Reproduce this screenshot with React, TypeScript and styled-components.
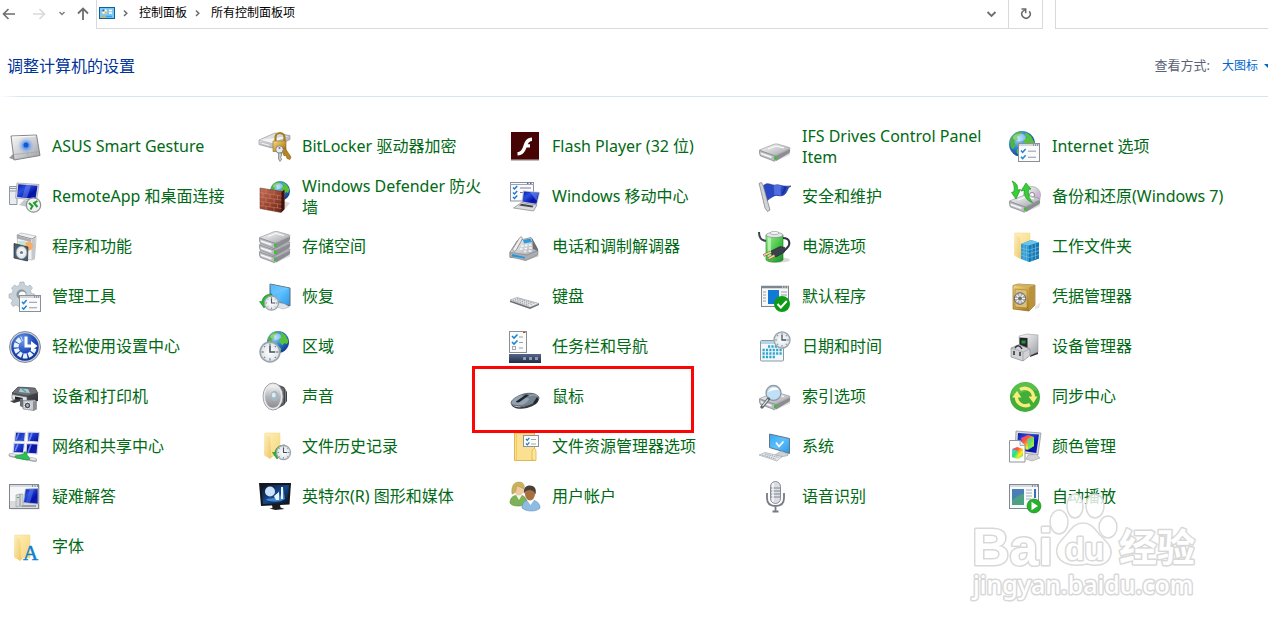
import React from "react";
import styled, { createGlobalStyle } from "styled-components";

const GlobalStyle = createGlobalStyle`
  * { box-sizing: border-box; }
  body {
    margin: 0;
    background: #fff;
    overflow-x: hidden;
    font-family: "Noto Sans", "Noto Sans CJK SC", sans-serif;
    font-size: 16px;
  }
`;

/* ---------- layout ---------- */

const Page = styled.div`
  position: relative;
  min-height: 100vh;
  background: #fff;
`;

const NavBar = styled.header`
  display: flex;
  height: 29px;
`;

const NavButtons = styled.div`
  display: flex;
  width: 96px;
  padding-top: 6px;
`;

const NavButton = styled.button<{ $gap: number; $narrow?: boolean }>`
  flex: none;
  width: ${(p) => (p.$narrow ? 10 : 16)}px;
  height: 16px;
  margin-left: ${(p) => p.$gap}px;
  padding: 0;
  border: 0;
  background: none;
  display: flex;
  justify-content: center;
`;

const AddressBar = styled.div`
  flex: 1;
  display: flex;
  border: 1px solid #d9d9d9;
  border-top: 0;
  margin-right: 12px;
`;

const Crumbs = styled.nav`
  flex: 1;
  display: flex;
  align-items: flex-start;
  padding-left: 2px;
  padding-top: 4px;
  font-size: 12px;
  line-height: 18px;
`;

const Crumb = styled.a`
  color: #000;
  text-decoration: none;
`;

const Separator = styled.svg`
  width: 24px;
  height: 18px;
`;

const CrumbIcon = styled.svg`
  width: 16px;
  height: 18px;
`;

const CrumbWrap = styled.div`
  display: flex;
`;

const AddressButton = styled.button<{ $divided?: boolean }>`
  width: 34px;
  padding: 6px 0 0;
  border: 0;
  border-left: ${(p) => (p.$divided ? "1px solid #d9d9d9" : "0")};
  background: none;
  display: flex;
  justify-content: center;
`;

const SearchBox = styled.input`
  width: 213px;
  height: 29px;
  border: 1px solid #d9d9d9;
  border-top: 0;
  border-right: 0;
  padding: 0 8px;
  outline: 0;
  background: #fff;
`;

const Heading = styled.div`
  display: flex;
  justify-content: space-between;
  align-items: center;
  height: 67px;
  padding: 6px 0 0 7px;
`;

const Title = styled.h1`
  margin: 0;
  font-size: 16px;
  font-weight: 400;
  line-height: 22px;
  color: #003399;
`;

const ViewBy = styled.div`
  display: flex;
  align-items: center;
`;

const ViewLabel = styled.label`
  font-size: 13px;
  line-height: 20px;
  color: #5a6377;
  margin-right: 12px;
  padding-bottom: 2px;
`;

const ViewSelect = styled.select`
  appearance: none;
  border: 0;
  padding: 0;
  margin: 0;
  width: 42px;
  background: none;
  font: inherit;
  font-size: 12px;
  line-height: 20px;
  color: #0066cc;
`;

const Rule = styled.hr`
  margin: 0;
  border: 0;
  height: 1px;
  background: linear-gradient(to right, #fff, #d5e4f3 20px);
`;

const Grid = styled.ul`
  list-style: none;
  margin: 0;
  padding: 25px 0 32px 9px;
  display: grid;
  grid-template-columns: repeat(auto-fill, 250px);
  grid-auto-rows: 50px;
`;

const Cell = styled.li`
  position: relative;
  display: flex;
`;

const Item = styled.a`
  display: flex;
  align-items: center;
  gap: 11px;
  color: #006a14;
  text-decoration: none;
`;

const ItemLabel = styled.span`
  max-width: 192px;
  line-height: 21px;
  padding-bottom: 1px;
`;

const ItemIcon = styled.svg`
  flex: none;
  width: 32px;
  height: 32px;
  overflow: visible;
`;

const Marker = styled.div`
  position: absolute;
  left: -37px;
  top: -6px;
  width: 222px;
  height: 67px;
  border: 3px solid #fb0505;
  z-index: 1;
  pointer-events: none;
`;

const Watermark = styled.svg`
  position: absolute;
  right: 62px;
  top: 490px;
  width: 240px;
  height: 120px;
  pointer-events: none;
`;

const Defs = styled.svg`
  position: absolute;
  width: 0;
  height: 0;
`;

/* ---------- shared drawing parts ---------- */

const Grad = ({ id, stops, diag = true }: { id: string; stops: string[]; diag?: boolean }) => (
  <linearGradient id={id} x1="0" y1="0" x2={diag ? "1" : "0"} y2="1">
    {stops.map((c, i) => (
      <stop key={i} offset={i / (stops.length - 1)} stopColor={c} />
    ))}
  </linearGradient>
);

const SharedDefs = () => (
  <Defs aria-hidden="true">
    <defs>
      <Grad id="silver" stops={["#fafafa", "#cfd0d3", "#9b9da2"]} />
      <Grad id="silverV" diag={false} stops={["#f4f4f4", "#b5b7ba", "#8b8d90"]} />
      <Grad id="screen" stops={["#0a1a9c", "#2a4fe0", "#0713a8", "#1021b8"]} />
      <Grad id="sky" stops={["#35a8f2", "#5cc0ff", "#2a96e6"]} />
      <Grad id="folderBack" stops={["#fff0b8", "#f5d67c"]} />
      <Grad id="folderFront" stops={["#fdf0c4", "#f0cb6c"]} />
      <Grad id="gold" stops={["#f5dc8c", "#cfa23a", "#94691a"]} />
      <Grad id="green" stops={["#a4ee9a", "#4cc94a", "#1f8c2a"]} />
      <Grad id="dark" stops={["#6a6d70", "#2c2f33"]} />
      <Grad id="brick" stops={["#c4725a", "#9a4430", "#5c2013"]} />
      <Grad id="bar" diag={false} stops={["#54688a", "#222c46"]} />
      <Grad id="rainbow" stops={["#ff33cc", "#ff5533", "#ffee22", "#33dd55"]} />
      <Grad id="rainbowB" stops={["#33e0ff", "#30e070", "#f5ff30"]} />
      <Grad id="navy" stops={["#0a1022", "#16478c", "#071022"]} />
      <radialGradient id="ocean" cx="0.35" cy="0.3" r="0.8">
        <stop offset="0" stopColor="#9fdcfa" />
        <stop offset="0.45" stopColor="#2f84d4" />
        <stop offset="1" stopColor="#0c2c8c" />
      </radialGradient>
      <radialGradient id="easeBlue" cx="0.4" cy="0.25" r="0.9">
        <stop offset="0" stopColor="#6f9be8" />
        <stop offset="0.5" stopColor="#1f4cb8" />
        <stop offset="1" stopColor="#0a2a86" />
      </radialGradient>
      <radialGradient id="glow">
        <stop offset="0" stopColor="#0a50c8" />
        <stop offset="0.35" stopColor="#3f86ee" />
        <stop offset="1" stopColor="#b9cdf2" stopOpacity="0" />
      </radialGradient>
      <radialGradient id="face">
        <stop offset="0" stopColor="#fff" />
        <stop offset="0.8" stopColor="#e3e8ec" />
        <stop offset="1" stopColor="#b4bcc2" />
      </radialGradient>
    </defs>
  </Defs>
);

const Globe = ({ x, y, r }: { x: number; y: number; r: number }) => (
  <g transform={`translate(${x} ${y}) scale(${r / 10})`}>
    <circle r="10" fill="url(#ocean)" />
    <path d="M-8.5-4C-7-8-3-9.6 0-9.6L-1-7l-3 1 1 3-3 1 1 4-2 2C-9 3-9.5-1-8.5-4z" fill="#4fb53c" />
    <path d="M3-9l4 3 2.6 5-1.6 3-2-1-2 2-3-3 1-4 2-1-2-2zM-4 4l4 0 3 2-1 3-3 .8L-4 7z" fill="#55c23a" />
    <ellipse cx="-2" cy="-5" rx="5" ry="3" fill="#fff" opacity=".35" />
  </g>
);

const Clock = ({ x, y, r }: { x: number; y: number; r: number }) => (
  <g transform={`translate(${x} ${y}) scale(${r / 10})`}>
    <circle r="9.5" fill="url(#face)" stroke="#9aa3aa" strokeWidth="1.4" />
    <path d="M0-8v2M0 6v2M-8 0h2M6 0h2M5.600-5.600l-1 1M-5.600 5.600l1-1M-5.600-5.600l1 1M5.600 5.600l-1-1" stroke="#7d878f" strokeWidth="1.200" />
    <path d="M0-6V0h5" fill="none" stroke="#47525c" strokeWidth="1.500" />
  </g>
);

const Drive = ({ y = 0 }: { y?: number }) => (
  <g transform={`translate(0 ${y})`}>
    <path d="M1 23l13 7 17-9v3L15 31z" fill="#000" opacity=".12" />
    <path d="M.5 19L15 13.200q2-.5 4 0L30.500 16.500q1 .8 0 1.500L17 24.500q-1.500.6-3 .2z" fill="url(#silver)" stroke="#8c8e92" strokeWidth=".6" />
    <path d="M.5 19.500Q0 23 1.500 25L15 30q1 0 1.500-.8V25z" fill="#b9bbc0" stroke="#77797d" strokeWidth=".6" />
    <path d="M16.500 25L31 18q.5 2.500-.5 4L17 30z" fill="#8b8d92" />
    <path d="M1.500 21.500l11 3.800v2L2 23.500z" fill="#f6f6f8" />
    <path d="M15 25.500l2.500-.3v3l-2.500.6z" fill="#38c432" />
    <path d="M9 18l8-3 8 2" fill="none" stroke="#fff" strokeWidth="1" />
  </g>
);

const Folder = ({ y = 0 }: { y?: number }) => (
  <g transform={`translate(0 ${y})`}>
    <path d="M6 2h15v23H6z" fill="url(#folderBack)" stroke="#f1d584" strokeWidth=".5" />
    <path d="M5 2l6 4.500V28l-6-4z" fill="url(#folderFront)" />
    <path d="M11 6.500V28l3-3V25h-2z" fill="#eecb70" />
  </g>
);

const CheckWindow = ({ x, y, w, h }: { x: number; y: number; w: number; h: number }) => (
  <g transform={`translate(${x} ${y})`}>
    <rect x=".5" y=".5" width={w - 1} height={h - 1} fill="#fbfbfc" stroke="#8a9096" />
    <path d={`M1 2h${w - 2}`} stroke="#c4c9ce" strokeWidth="1.500" />
    <path d={`M${w - 7} 2h1M${w - 5} 2h1M${w - 3} 2h1`} stroke="#4a5d78" strokeWidth="1.200" />
    <path d={`M3 ${h * 0.4}l1.600 1.800 3-3.500M3 ${h * 0.73}l1.600 1.800 3-3.500`} fill="none" stroke="#1d86d6" strokeWidth="1.500" />
    <path d={`M10 ${h * 0.43}h${w - 14}M10 ${h * 0.75}h${w - 14}`} stroke="#9097ab" strokeWidth="1" />
  </g>
);

const RecoveryArrow = () => (
  <path d="M13 13C7 13 3.500 16 3 20.500H.5L5 27l5-6.500H7.500c.5-2.500 2.500-4 5.500-4.300z" fill="#26b52d" stroke="#127a1a" strokeWidth=".5" />
);

/* ---------- icons ---------- */

const icons: Record<string, React.ReactNode> = {
  touchpad: (
    <>
      <path d="M0 27l6 2-2-6z" fill="#9a9a9c" />
      <path d="M2 5L27.500 4 31 24.500 5 29z" fill="url(#silver)" stroke="#77797e" strokeWidth=".9" />
      <path d="M3.300 6l23.400-.9" stroke="#fff" strokeWidth=".8" />
      <circle cx="17" cy="14.500" r="9" fill="url(#glow)" opacity=".7" />
      <circle cx="17" cy="14" r="2.500" fill="#0d5bdc" />
      <path d="M5 23.500l25-2.800M18.500 22l.6 4.500" stroke="#a2a3a8" strokeWidth=".7" />
    </>
  ),
  bitlocker: (
    <>
      <path d="M0 9L16 2l15 2.500v4L13 17 0 13.500z" fill="url(#silver)" stroke="#85878b" strokeWidth=".6" />
      <path d="M0 9l13 3.500L31 5M2 11l9 2.500v2L2 13z" fill="#f4f4f5" stroke="#9ea0a4" strokeWidth=".5" />
      <path d="M16.500 11V6.500a4.500 4.500 0 0 1 9 0V11" fill="none" stroke="#a47f22" strokeWidth="2.200" />
      <path d="M14 10h13v10.500H14z" fill="url(#gold)" stroke="#8e6a18" strokeWidth=".6" />
      <path d="M22 18l4-1 6 9-1 2.500-3-1-1-3-2 .2z" fill="#b78422" stroke="#74500c" strokeWidth=".5" />
      <circle cx="20.500" cy="18.500" r="3.700" fill="#e8e9eb" stroke="#74777b" strokeWidth=".8" />
      <circle cx="20.500" cy="17" r="1" fill="#777" />
      <path d="M19.500 22v6l1.500 2.500 1.500-2v-1l-1-1 1-1.500V22z" fill="#c5c7ca" stroke="#63666a" strokeWidth=".6" />
    </>
  ),
  flash: (
    <>
      <path d="M2 28h28v2H2z" fill="#000" opacity=".25" />
      <rect x="2" y="1" width="28" height="27.500" fill="#460404" />
      <path d="M23 6.500c-5.500 0-7 4-8.500 8-1.500 4-2.500 6.500-6 6.500v3.500c5.500 0 7.500-4 9-8h3.500v-3.300h-2.200c.9-2 2-3.300 4.200-3.300z" fill="#fff" />
    </>
  ),
  drive: <Drive />,
  internet: (
    <>
      <Globe x={13} y={13} r={13} />
      <CheckWindow x={9} y={12} w={22} h={19} />
    </>
  ),
  remote: (
    <>
      <path d="M.5 5.500H8v18H.5z" fill="#e9edf2" stroke="#8d98a5" />
      <path d="M0 7.500h8M0 10h8" stroke="#8d98a5" />
      <path d="M8 2l22 1.500-2.500 16L6.500 17z" fill="#dcdde0" stroke="#9a9ca1" strokeWidth=".7" />
      <path d="M9.300 3.300L28.500 4.700 26.500 18 8 16z" fill="url(#screen)" />
      <path d="M17 4l-4 12.500 5 .6L22 4.200z" fill="#6d8cf0" opacity=".5" />
      <path d="M15 19l-5 5 8 2 3-6z" fill="#c6c8cc" />
      <circle cx="24.500" cy="24" r="7.200" fill="#f0f1f2" stroke="#8d9095" strokeWidth="1.200" />
      <path d="M20 22l3.500 3-2 3.500M28.500 20L25 22l3.500 4" fill="none" stroke="#1d9a2c" strokeWidth="2" />
    </>
  ),
  firewall: (
    <>
      <Globe x={21} y={10} r={10} />
      <path d="M25 20l6 2-5 6z" fill="#000" opacity=".15" />
      <path d="M1 7l22.500 3.500 2-1.500V28L22 31.500 1 27.500z" fill="url(#brick)" stroke="#6d2b1c" strokeWidth=".5" />
      <path d="M22.500 11L25 9v19.500l-3 3z" fill="#3d120a" />
      <path d="M1 11.500l21.500 3.500M1 16l21.500 3M1 20.500l21.500 2.800M1 24.500l21.500 3M7 8v4.200M15 9.200v4.300M4 12v4.300M11 13.200v4M18.500 14.400v4M7 17v4M15 18v4M4 21v4M11 22v4M18.500 23v4M7 25.500v3M15 26.500v3.500" stroke="#d08c74" strokeWidth=".5" />
    </>
  ),
  mobility: (
    <>
      <rect x="1.500" y="1.500" width="23" height="18.500" fill="#fbfbfd" stroke="#8992a0" />
      <path d="M1 3.500h24" stroke="#9ba5b4" />
      <path d="M18 2.300h1.500M21 2.300h1.500" stroke="#33476a" />
      <path d="M4 6.500l1.500 1.500 2.700-3M4 11.500l1.500 1.500 2.700-3M4 16l1.500 1.500 2.700-3" fill="none" stroke="#1878c8" strokeWidth="1.400" />
      <path d="M11 7h11M11 11.500h5" stroke="#7d7aa0" />
      <path d="M14 9.500l17 1.500-3 13L12.500 21z" fill="#c3c6cc" />
      <path d="M15 10.500l15 1.200-2.600 11L13.500 20.500z" fill="url(#screen)" />
      <path d="M21 11l8.500.8-2 8z" fill="#86a4fa" opacity=".5" />
      <path d="M12.500 21.500L28 24l-3.500 6-20-3z" fill="#dadce0" stroke="#70747a" strokeWidth=".6" />
      <path d="M12.500 22.800l12 2-1 1.800-13.500-2z" fill="#45494f" />
    </>
  ),
  flag: (
    <>
      <path d="M4 5c5-5 8 0 13-1 4-.8 5 2 15 1-4 2-3 5-6 8-4 4-8 0-11 2-3 1.500-5 3-7 5z" fill="#2b48c4" stroke="#14257f" strokeWidth=".6" />
      <path d="M15 4c-1 3 1 6 0 10 3-1 5 .5 7 .2-.5-4-1-7 1-9.500-3-.3-5-1.300-8-.7z" fill="#6b8af0" opacity=".6" />
      <path d="M26 5.500c-2 2-2 6-4 8.500 4-1 4-5 6-7.500z" fill="#10207c" opacity=".6" />
      <path d="M0 2.500l2.500-1L4 4l7 25-2.500 1.500L6 27 1 6z" fill="#d1d3d7" stroke="#787b80" strokeWidth=".7" />
    </>
  ),
  backup: (
    <>
      <circle cx="23" cy="14" r="8.500" fill="url(#silver)" stroke="#95979b" strokeWidth=".6" />
      <path d="M23 14l8-3a8.500 8.500 0 0 1 0 6z" fill="#d9b0e8" opacity=".7" />
      <circle cx="23" cy="14" r="2.500" fill="#fff" stroke="#888" />
      <Drive y={1} />
      <path d="M3 0c5 2 6 5 5.500 9l3-.5L7 18 2.500 11.500l2.500-1C5.500 6 5 3 3 0z" fill="#35d135" stroke="#158a1b" strokeWidth=".6" />
      <path d="M17 2l5 6-2.500.5c-.5 5 0 8 4 13-6-2-8.500-6-8-12l-3.500.5z" fill="#35d135" stroke="#158a1b" strokeWidth=".6" />
    </>
  ),
  programs: (
    <>
      <path d="M8 4L12 2l15 3v3l-1.500 20-3 1-13-2z" fill="#f0f1f2" stroke="#a4a7ab" strokeWidth=".6" />
      <path d="M8 4l15 4 4-2.500" fill="none" stroke="#8f9397" />
      <path d="M22.500 8.500l3.500-2V28l-3.500 1z" fill="#c5c8cb" />
      <path d="M8 4.500l14 4v2.500L8 7.500z" fill="#a9acb0" />
      <circle cx="19.500" cy="15" r="4.500" fill="#f4ae6c" />
      <path d="M9.500 10h7v6h-7z" fill="#c9e3d7" />
      <path d="M5 12.500l14 3.500-.5 14L5 27z" fill="#4a5e70" stroke="#222e3a" strokeWidth=".7" />
      <ellipse cx="12.500" cy="21.500" rx="5.500" ry="6.500" fill="url(#face)" stroke="#8a9299" strokeWidth=".5" />
      <circle cx="12.500" cy="21.500" r="1.600" fill="#6b7c8c" />
    </>
  ),
  storage: (
    <>
      <Drive y={1.500} />
      <Drive y={-5.500} />
      <Drive y={-12.500} />
    </>
  ),
  phone: (
    <>
      <path d="M6 26l10 4 14-5-3-2z" fill="#000" opacity=".25" />
      <path d="M1 21l7-11 14-3.500 5 9.500 2 4-12 5L1 26.500z" fill="url(#silver)" stroke="#75787d" strokeWidth=".7" />
      <path d="M1 21L18 24l11-4.500v4L17 29.500 1 26z" fill="#aaaeb4" stroke="#73777d" strokeWidth=".5" />
      <path d="M23 7l6 11v2l-5-2z" fill="#6d7176" />
      <path d="M3 23l13 3v1.500l-13-2z" fill="#2398d8" />
      <path d="M14 9l7.500-1.500 1.500 3.500-8 1.500z" fill="#2b9ae0" />
      <path d="M12 15h2.500M16 14.500h2.500M20 14h2.500M11 18h2.500M15.500 17.500h2.500M20 17h3M15 20.500h2.500M19.500 20h3" stroke="#f7f8f9" strokeWidth="1.500" />
      <path d="M10.500 7C12 5 14 6 13 8.500L7.500 18.500c-1.500 3-4.500 2-3.500-1z" fill="#f0f1f3" stroke="#6d7176" strokeWidth=".7" />
    </>
  ),
  power: (
    <>
      <ellipse cx="22" cy="29" rx="9" ry="2.500" fill="#000" opacity=".15" />
      <path d="M0 1c0 6 2 8 7 9" fill="none" stroke="#3b4253" strokeWidth="2" />
      <path d="M7 4h17v25c-3 3-14 3-17 0z" fill="url(#green)" stroke="#1b7a28" strokeWidth=".6" />
      <path d="M9 6h3v22H9z" fill="#d7ffd0" opacity=".6" />
      <ellipse cx="15.500" cy="4" rx="8.500" ry="2.600" fill="#e4e7ea" stroke="#7b8187" strokeWidth=".6" />
      <ellipse cx="15.500" cy="2" rx="4.500" ry="1.600" fill="#f4f5f6" stroke="#8a8f94" strokeWidth=".6" />
      <path d="M24 7c7 0 8 6 4 10l-4 4" fill="none" stroke="#2d3546" strokeWidth="2" />
      <path d="M12 20l9-4.500 5 1-1 5-8 4.500-4-2z" fill="#3a3f4c" stroke="#181b24" strokeWidth=".5" />
      <path d="M12 21L4.500 24.500M15.500 24.500L9 28" stroke="#8b6a3a" strokeWidth="3" />
      <path d="M12 21L5 24.300M15.500 24.500L9.500 27.600" stroke="#efd3a0" strokeWidth="1.500" />
    </>
  ),
  workfolder: (
    <>
      <Folder />
      <path d="M12 13l10-4 8 2.500v16L20 31l-8-3z" fill="#2f9bd2" />
      <path d="M12 13l10-4 8 2.500-10 3z" fill="#6cc3ea" />
      <path d="M20 14.500l10-3v16L20 31z" fill="#1778b4" />
      <path d="M12 17l8 2 10-3M12 20.500l8 2 10-3M12 24l8 2.500 10-3M15 14v15M17.500 14.500V30M23 14v16M26.500 13v15" fill="none" stroke="#7cc6e8" strokeWidth=".6" />
    </>
  ),
  admin: (
    <>
      <path d="M11 1h4l.5 3 3 1.500L21 4l2.500 3-2 2.500 1 3 3 .5v4l-3 .5-1 3 1.500 2.500-3 3-2.500-1.500-2 1-.5 3h-4l-1-3-3-1.500L4 25.500 2 22.500l1.500-3-1.500-2-2-.5 0-4 3-.5 1-3-1.500-2.500 3-3L8 5.500 10.500 4z" fill="#c7d1d9" stroke="#a0adb7" strokeWidth=".6" />
      <circle cx="12.500" cy="13.500" r="5" fill="#8a949d" />
      <circle cx="13.300" cy="14" r="3.500" fill="#fff" />
      <CheckWindow x={10} y={14} w={22} h={17} />
    </>
  ),
  recovery: (
    <>
      <path d="M11 3l20 4v18l-20-7z" fill="url(#sky)" stroke="#5a6a78" strokeWidth="1" />
      <path d="M11 3l20 4L13 15z" fill="#8ad2ff" opacity=".4" />
      <path d="M17 21l9 2 4 3-6 2-9-3z" fill="#e0e4e8" stroke="#9da4ab" strokeWidth=".5" />
      <RecoveryArrow />
      <Clock x={12.500} y={22} r={7.500} />
    </>
  ),
  keyboard: (
    <>
      <path d="M1 19.500l20 6.500 9-3.500v1.500l-9 4L1 21z" fill="#686c72" />
      <path d="M1 19l7-2.500 22 6-9 3.800z" fill="#e8eaec" stroke="#8c9095" strokeWidth=".6" />
      <path d="M4 19.200l16 5.200M6 18.200L23 23.500M8 17.400L26 22.600" stroke="#9da2a8" strokeWidth="1" strokeDasharray="1.500 .8" />
    </>
  ),
  defaults: (
    <>
      <rect x="2.500" y="5.500" width="27" height="20" fill="#f6f7f8" stroke="#7c868f" />
      <path d="M2 6h28" stroke="#7c868f" strokeWidth="2.500" />
      <path d="M23 6h1M25.500 6h1M28 6h1" stroke="#fff" />
      <rect x="9" y="9" width="11" height="14" fill="#127ad6" />
      <path d="M4 11h3M4 14h3M4 17h3M4 20h3M22 11h6M22 14h6" stroke="#98a0a7" />
      <circle cx="23" cy="23" r="8" fill="#0f9a15" />
      <path d="M18.500 23l3.300 3.500 6-6.500" fill="none" stroke="#fff" strokeWidth="2" />
    </>
  ),
  safe: (
    <>
      <path d="M26 26l6-5-2 6-4 1z" fill="#000" opacity=".1" />
      <path d="M4 4.500L9 3l17 1v20l-6 6L4 28z" fill="url(#gold)" stroke="#80601a" strokeWidth=".6" />
      <path d="M4 4.500L9 3l17 1-6 2.500z" fill="#cdb066" />
      <path d="M20 6.500L26 4v20l-6 6z" fill="#b8923c" />
      <path d="M6 8l12 1v18L6 26z" fill="#dcc078" stroke="#9e7b2b" strokeWidth=".6" />
      <circle cx="11" cy="17.500" r="5.800" fill="#a8aaac" stroke="#55575a" strokeWidth=".8" />
      <path d="M11 12.500v10M6 17.500h10M7.500 14l7 7M14.500 14l-7 7" stroke="#f2f2f2" strokeWidth="1.200" />
      <circle cx="11" cy="17.500" r="2" fill="#6a6c70" />
    </>
  ),
  ease: (
    <>
      <circle cx="16" cy="16" r="15.500" fill="#c9ced8" stroke="#6d7687" strokeWidth=".8" />
      <circle cx="16" cy="16" r="13.700" fill="url(#easeBlue)" />
      <path d="M25 17.500A9 9 0 1 1 13 7.500" fill="none" stroke="#e9f2ff" strokeWidth="5" strokeDasharray="4 1.200" />
      <path d="M15.500 5.500h3v8H22v-3.500l6.500 5-6.500 5v-3.500h-6.500z" fill="#fff" />
    </>
  ),
  region: (
    <>
      <Globe x={19} y={11} r={11} />
      <Clock x={11} y={21} r={10.500} />
    </>
  ),
  taskbar: (
    <>
      <rect x=".5" y=".5" width="17" height="21" fill="#fafbfb" stroke="#8b8f92" />
      <path d="M14 1.500h2.500" stroke="#d03a2a" />
      <path d="M3 5l2 2 3.500-3.500M3 11l2 2 3.500-3.500" fill="none" stroke="#1b87d2" strokeWidth="1.600" />
      <path d="M10 6h4M10 11.500h4M10 17h4" stroke="#9aa0a5" />
      <rect x="3.500" y="15.500" width="3" height="3" fill="none" stroke="#a6abb0" />
      <rect y="23" width="32" height="9" fill="url(#bar)" />
      <path d="M14 26h3v3h-3zM20 26h3v3h-3zM26 26h3v3h-3z" fill="#8d9ab2" />
    </>
  ),
  calendar: (
    <>
      <rect x="1.500" y="9.500" width="23" height="20.500" rx="1" fill="#f3f7f9" stroke="#8899a4" />
      <path d="M2 11.500h22" stroke="#b4d6e4" strokeWidth="3" />
      <path d="M9 15.500h14M3.500 19h19.500M3.500 22.500h19.500M3.500 26h13" stroke="#2fa6d0" strokeWidth="2.400" strokeDasharray="2.200 1.200" />
      <Clock x={23} y={9} r={8.500} />
    </>
  ),
  devices: (
    <>
      <path d="M22 22l7-2v3l-8 3z" fill="#2b2d30" />
      <path d="M10 5l8-2 11 1V21l-8 3.500-10-3z" fill="url(#silver)" stroke="#8b8d91" strokeWidth=".5" />
      <path d="M10.500 6.500l8 .5V17l-8-1z" fill="#24272a" />
      <path d="M12.500 9.500h4v3h-4z" fill="#1f9a2a" />
      <path d="M2 17l8-3.500L21 18v6.500L14 30 2 26z" fill="#d0d2d6" stroke="#7d8085" strokeWidth=".6" />
      <path d="M2 17l12 4v9M14 21l7-3" fill="none" stroke="#9a9da2" strokeWidth=".7" />
      <path d="M4 20h2v4H4zM10 21h2v4h-2z" fill="#53565b" />
      <path d="M6 17c2-3 5-3 7 1" fill="none" stroke="#303236" strokeWidth="1.500" />
    </>
  ),
  printer: (
    <>
      <path d="M3 12l6-6 17 1 3 6v7l-9 2L3 18z" fill="url(#dark)" />
      <path d="M3 12l6-6 17 1 3 5-11 3z" fill="#6e7277" stroke="#34373b" strokeWidth=".5" />
      <path d="M11 7.500l8 .5 2 4-11-1z" fill="#a9c9e2" />
      <path d="M13 8l4 3" stroke="#4cb37b" strokeWidth="1.500" />
      <path d="M3 13.500l15 2.500v5L3 18z" fill="#e0e2e5" stroke="#65696e" strokeWidth=".6" />
      <path d="M6 15.500l8 1.500v3l-8-1.500z" fill="#1d1f22" />
      <path d="M1 20l9-2 4 1.500L5 22z" fill="#3a3e43" />
      <path d="M11 18l3-1v9.500L11 25z" fill="#6b6f74" />
      <path d="M14 19.500l12-.5 1.500 2v7l-3 1.500-10.500-1.500z" fill="#c6c9ce" stroke="#777a80" strokeWidth=".6" />
      <path d="M24 20.500l3.500-.5v8.500l-3.500 1.500z" fill="#8a8d92" />
      <circle cx="18.500" cy="24.500" r="3.300" fill="#4a4f55" stroke="#f5f5f5" strokeWidth=".9" />
      <circle cx="18.500" cy="24.500" r="1.400" fill="#9ab9d2" />
    </>
  ),
  speaker: (
    <>
      <path d="M15 2l10 4 3 5v9l-3 4-9 5z" fill="url(#dark)" />
      <path d="M24 7v17M26.500 9v13" stroke="#8a8d90" strokeWidth=".8" />
      <ellipse cx="14" cy="15.500" rx="10" ry="13.500" fill="#e6e8ea" stroke="#8e9194" strokeWidth=".8" />
      <ellipse cx="14" cy="15.500" rx="8" ry="11.300" fill="url(#silverV)" />
      <ellipse cx="15.500" cy="15" rx="4" ry="5" fill="#a4b7c4" />
      <ellipse cx="14.800" cy="14" rx="2" ry="2.600" fill="#dfe9ef" />
    </>
  ),
  mouse: (
    <>
      <path d="M2 22c3 6 13 5 19 1l9-6c0 6-6 8-12 10-8 2-16 0-16-5z" fill="#33373b" />
      <path d="M2 21.500c1-4 9-8 15-9 7-1 13 1 13 5-2 4-10 8-17 8-7-.5-11-1.500-11-4z" fill="#74828f" stroke="#3c464f" strokeWidth=".7" />
      <path d="M2.500 21.500c1-3.500 6-6.500 10-7.500l8 4c-3 4-6 6-9 6-5 0-9-.5-9-2.500z" fill="#93a3b0" />
      <path d="M7 20.500L17 13.500l3 .8-9 6.500c-1 1-4 1-4-.3z" fill="#1e252c" />
      <path d="M20 15c3-1.500 6-1.500 8.500 0" fill="none" stroke="#b3bfc9" strokeWidth=".8" />
      <path d="M28 16c2 2 1 5-2 7l-2-1z" fill="#23272b" />
    </>
  ),
  index: (
    <>
      <Drive y={-1.500} />
      <circle cx="14.500" cy="12" r="7.500" fill="#bfe0f6" stroke="#9299a1" strokeWidth="1.300" />
      <path d="M9 11c2-5 8-6 11-2-4-1-7 1-11 2z" fill="#fff" />
      <path d="M9.500 18L3 26" stroke="#5e656c" strokeWidth="3.300" strokeLinecap="round" />
      <path d="M9 18.500L3.500 25" stroke="#dfe3e7" strokeWidth="1.200" />
    </>
  ),
  sync: (
    <>
      <circle cx="16" cy="16" r="15" fill="#41ae39" />
      <path d="M3 10A14 14 0 0 1 29 10C20 6 11 14 2 14z" fill="#6fcf5c" opacity=".5" />
      <path d="M11 8.500A9 9 0 0 1 24.500 17" fill="none" stroke="#f9ec7c" strokeWidth="3.400" />
      <path d="M21 23.500A9 9 0 0 1 7.500 15" fill="none" stroke="#f9ec7c" strokeWidth="3.400" />
      <path d="M19.500 15.500h9L24.500 22zM3 16.500h9.500L8 10z" fill="#f9ec7c" />
    </>
  ),
  network: (
    <>
      <g stroke="#d8dbe0" strokeWidth="1.200" fill="url(#screen)">
        <path d="M6.500 1l10 .5-1 9-10-.5zM19 1l11.500.5-1 9.500-11-.7zM5 12l10.500.5-1 9.500L4 21.500zM17.500 12.500l11.500.5-1 10-11-1z" />
      </g>
      <path d="M10 2l-3 7M23 2l-3 8M9 13l-3 7M22 13.500l-3 8" stroke="#a5b8fa" strokeWidth="1.700" opacity=".6" />
      <path d="M1.500 24L26 29" stroke="#a5a9ae" strokeWidth="4" strokeLinecap="round" />
      <path d="M1.500 23.500L26 28.500" stroke="#e4e6e8" strokeWidth="2" strokeLinecap="round" />
      <path d="M6 25l9-2v-2h3v3l3 4-3 1-11-2z" fill="#2ec158" stroke="#128a34" strokeWidth=".6" />
    </>
  ),
  history: (
    <>
      <Folder />
      <g transform="translate(13 1)">
        <RecoveryArrow />
        <Clock x={11.500} y={20.500} r={7.500} />
      </g>
    </>
  ),
  folderOptions: (
    <>
      <path d="M5.500 2h20v27.500h-20z" fill="#fbe092" stroke="#e2b74d" />
      <path d="M7.500 3v26" stroke="#f1ca68" />
      <path d="M23 29V20c2-5 4-2 4 1v8.500z" fill="#fce69f" stroke="#dfb24a" strokeWidth=".8" />
      <rect x="14.500" y="4.500" width="15" height="11" fill="#fcfcfd" stroke="#89939f" />
      <path d="M17 8l1.300 1.300 2-2.500M17 12.500l1.300 1.300 2-2.500" fill="none" stroke="#1878c8" strokeWidth="1.200" />
      <path d="M22 8.500h5M22 13h5" stroke="#a3a8ae" />
    </>
  ),
  system: (
    <>
      <path d="M10.500 3l20 4.500v15l-20-6z" fill="url(#sky)" stroke="#5d6b78" strokeWidth=".9" />
      <path d="M17 11.500l3 4 4.500-5" fill="none" stroke="#fff" strokeWidth="1.600" />
      <path d="M22 20l7 3v1.500l-7 1.500-6-2z" fill="#cdd2d7" stroke="#8b939b" strokeWidth=".5" />
      <path d="M0 24l6-2.500L23 25.500 18 30z" fill="#e6e9ec" stroke="#969da4" strokeWidth=".6" />
      <path d="M3 24l14 4M6 23l14 3.500" stroke="#a9b0b6" strokeWidth="1.200" strokeDasharray="1.500 .8" />
    </>
  ),
  color: (
    <>
      <path d="M7 0l25 2-3 22-23-3z" fill="#d9dadd" stroke="#8a8c90" strokeWidth=".7" />
      <path d="M9 2l21 1.500-2.700 18.500L8 19z" fill="url(#screen)" />
      <path d="M12 7l7-3 6 2v9l-7 4-4-3z" fill="url(#rainbow)" />
      <path d="M18 8l7-2v9l-6 4z" fill="url(#rainbowB)" opacity=".7" />
      <path d="M19 24l8-1 4 4-8 3-6-2z" fill="#d0d2d5" stroke="#8f9195" strokeWidth=".5" />
      <path d="M.5 9.500H11l5 5v16.500H.5z" fill="#fff" stroke="#8f9499" />
      <path d="M11 9.500v5h5" fill="#e4e7ea" stroke="#8f9499" strokeWidth=".7" />
      <path d="M3 18l5-2 6 2v7l-5 3-6-2z" fill="url(#rainbow)" />
      <path d="M3 18l6 2v8l-6-2z" fill="url(#rainbowB)" />
    </>
  ),
  troubleshoot: (
    <>
      <path d="M2 4h29v24.500H2z" fill="#000" opacity=".12" />
      <rect x=".5" y="3.500" width="29" height="24" fill="#f5f7f8" stroke="#7d868f" />
      <path d="M1 5h28" stroke="#d5dbe0" strokeWidth="2" />
      <path d="M23 5h1M25.500 5h1M28 5h1" stroke="#304866" strokeWidth="1.200" />
      <path d="M1 20h28v7H1z" fill="#d9dcdf" />
      <path d="M7 14l4-1v12l-4 1zM11 13h3v12h-3z" fill="#d5d7db" stroke="#888c91" strokeWidth=".5" />
      <path d="M8 16.500h2" stroke="#42b94a" />
      <path d="M16.500 8L29 7.500v15.500L14.500 21.500z" fill="url(#screen)" stroke="#b9bcc1" strokeWidth=".7" />
      <path d="M21 8l-4 13 4 .7 4-14z" fill="#5e80f0" opacity=".45" />
      <path d="M14 24h13v2H12z" fill="#9b9fa5" />
    </>
  ),
  intel: (
    <>
      <path d="M0 2h32l-1.500 21.500L2 25z" fill="#15171a" />
      <path d="M2.500 4H30l-1.300 18L4 23z" fill="url(#navy)" />
      <circle cx="11" cy="10.500" r="5" fill="#cbe3fa" />
      <path d="M7 19c2-3 6 0 9-3l4-6 1 6 3-10 2 12c-6 4-13 3-19 1z" fill="#4e9ae8" opacity=".8" />
      <path d="M15 15l5-4v8h-3zM22 6h2v12h-2z" fill="#e9f4ff" />
      <path d="M13 24l8-.5.500 3 4 1.500-9 1-6-1.500 3-.5z" fill="#1a1c1f" />
    </>
  ),
  users: (
    <>
      <path d="M1 22c0-6 4-8 9-8s8 3 8 9l-7 2c-4 0-8 0-10-3z" fill="#7db356" stroke="#4f8030" strokeWidth=".5" />
      <path d="M7 14l3 5 3-5z" fill="#f3f7ea" />
      <ellipse cx="10" cy="8.500" rx="4.800" ry="6" fill="#f0c9a0" />
      <path d="M3 13C2 5 5 1 10 1s6 4 5 7c-3-2-6-3-8-3 1 4-1 8-4 8z" fill="#c9b35c" stroke="#98822f" strokeWidth=".4" />
      <path d="M13 27c0-6 3-8 9-8s9 4 9 8c-3 4-14 4-18 0z" fill="#8fbbe2" stroke="#5583ac" strokeWidth=".5" />
      <path d="M18 19l3.500 5 3.500-5z" fill="#fff" />
      <ellipse cx="21" cy="13" rx="5" ry="6.500" fill="#a9703f" />
      <path d="M15 13c-1-6 2-8.500 6-8.500s7 3 5.500 9c-1-3-3-4-5.500-4.500-3 0-5 1-6 4z" fill="#4a403a" />
    </>
  ),
  mic: (
    <>
      <path d="M8 12v5c0 5 3 8 8.500 8s8.500-3 8.500-8v-5M16.500 25v5M13.500 30.500h6" fill="none" stroke="#777b85" strokeWidth="1.800" />
      <rect x="11.500" y="0.500" width="10" height="22" rx="5" fill="#dcdee4" stroke="#70747f" strokeWidth=".8" />
      <path d="M12 7h9M12 10h9M12 13h9M12 16h9" stroke="#7f838e" strokeWidth="1.200" />
      <path d="M14 2v19" stroke="#fff" strokeWidth="1.600" opacity=".8" />
    </>
  ),
  autoplay: (
    <>
      <rect x=".5" y="3.500" width="29" height="24" fill="#f7f9fa" stroke="#7f8992" />
      <path d="M1 5h28" stroke="#d5dbe0" strokeWidth="2" />
      <path d="M23 5h1M25.500 5h1M28 5h1" stroke="#304866" strokeWidth="1.200" />
      <rect x="3" y="8" width="12" height="16" fill="#4ea082" />
      <path d="M3 8h12v5C10 13 7 17 3 19z" fill="#4a7fb6" />
      <path d="M17 9h6M17 12h6M17 15h6M17 18h5" stroke="#a4acb4" />
      <rect x="25" y="8" width="2" height="9" fill="#3a70b0" />
      <circle cx="25" cy="25" r="7" fill="#27b02c" stroke="#16851b" strokeWidth=".6" />
      <path d="M22.500 20.800l6.500 4.200-6.500 4.200z" fill="#fff" />
    </>
  ),
  fonts: (
    <>
      <Folder y={2} />
      <text x="14" y="29" fontFamily="Liberation Serif, serif" fontSize="21" fill="#0c7fcf" stroke="#0c7fcf" strokeWidth=".5">
        A
      </text>
    </>
  ),
};

/* ---------- content ---------- */

const entries: { icon: string; label: string; marked?: boolean }[] = [
  { icon: "touchpad", label: "ASUS Smart Gesture" },
  { icon: "bitlocker", label: "BitLocker 驱动器加密" },
  { icon: "flash", label: "Flash Player (32 位)" },
  { icon: "drive", label: "IFS Drives Control Panel Item" },
  { icon: "internet", label: "Internet 选项" },
  { icon: "remote", label: "RemoteApp 和桌面连接" },
  { icon: "firewall", label: "Windows Defender 防火墙" },
  { icon: "mobility", label: "Windows 移动中心" },
  { icon: "flag", label: "安全和维护" },
  { icon: "backup", label: "备份和还原(Windows 7)" },
  { icon: "programs", label: "程序和功能" },
  { icon: "storage", label: "存储空间" },
  { icon: "phone", label: "电话和调制解调器" },
  { icon: "power", label: "电源选项" },
  { icon: "workfolder", label: "工作文件夹" },
  { icon: "admin", label: "管理工具" },
  { icon: "recovery", label: "恢复" },
  { icon: "keyboard", label: "键盘" },
  { icon: "defaults", label: "默认程序" },
  { icon: "safe", label: "凭据管理器" },
  { icon: "ease", label: "轻松使用设置中心" },
  { icon: "region", label: "区域" },
  { icon: "taskbar", label: "任务栏和导航" },
  { icon: "calendar", label: "日期和时间" },
  { icon: "devices", label: "设备管理器" },
  { icon: "printer", label: "设备和打印机" },
  { icon: "speaker", label: "声音" },
  { icon: "mouse", label: "鼠标", marked: true },
  { icon: "index", label: "索引选项" },
  { icon: "sync", label: "同步中心" },
  { icon: "network", label: "网络和共享中心" },
  { icon: "history", label: "文件历史记录" },
  { icon: "folderOptions", label: "文件资源管理器选项" },
  { icon: "system", label: "系统" },
  { icon: "color", label: "颜色管理" },
  { icon: "troubleshoot", label: "疑难解答" },
  { icon: "intel", label: "英特尔(R) 图形和媒体" },
  { icon: "users", label: "用户帐户" },
  { icon: "mic", label: "语音识别" },
  { icon: "autoplay", label: "自动播放" },
  { icon: "fonts", label: "字体" },
];

const Chevron = () => (
  <Separator viewBox="0 0 24 18" aria-hidden="true">
    <path d="M9 6.500l2.800 2.800L9 12" fill="none" stroke="#6b6b6b" strokeWidth="1.500" />
  </Separator>
);

const Navigation = () => (
  <NavBar>
    <NavButtons>
      <NavButton $gap={1} aria-label="后退">
        <svg width="14" height="16" viewBox="0 0 14 16">
          <path d="M1.500 8H13M6.500 3l-5 5 5 5" fill="none" stroke="#6e6e6e" strokeWidth="1.600" />
        </svg>
      </NavButton>
      <NavButton $gap={14} aria-label="前进">
        <svg width="14" height="16" viewBox="0 0 14 16">
          <path d="M1 8h11.500M7.500 3l5 5-5 5" fill="none" stroke="#d9d9d9" strokeWidth="1.600" />
        </svg>
      </NavButton>
      <NavButton $gap={10} $narrow aria-label="最近浏览的位置">
        <svg width="8" height="16" viewBox="0 0 8 16">
          <path d="M1.500 6L4 8.500 6.500 6" fill="none" stroke="#808080" strokeWidth="1.500" />
        </svg>
      </NavButton>
      <NavButton $gap={8} aria-label="上移">
        <svg width="14" height="16" viewBox="0 0 14 16">
          <path d="M7 14V2.500M2 7.500l5-5 5 5" fill="none" stroke="#6e6e6e" strokeWidth="1.800" />
        </svg>
      </NavButton>
    </NavButtons>
    <AddressBar>
      <Crumbs>
        <CrumbIcon viewBox="0 0 16 18" aria-hidden="true">
          <rect x=".5" y="3.500" width="15" height="11" fill="#7cc8f5" stroke="#0f5f98" />
          <circle cx="5.500" cy="7.500" r="2.500" fill="#fff" />
          <path d="M5.500 7.500V5a2.500 2.500 0 0 0-2.500 2.500z" fill="#1c6fb0" />
          <path d="M5.500 7.500H8A2.500 2.500 0 0 1 5.500 10z" fill="#f5b13a" />
          <path d="M2 12.500h4" stroke="#f5a623" strokeWidth="1.500" />
          <path d="M7 12.500h6" stroke="#3fa0e0" strokeWidth="1.500" />
          <path d="M10 6.500h3M10 9h3" stroke="#fff" strokeWidth="1.500" />
        </CrumbIcon>
        <CrumbWrap>
          <Chevron />
          <Crumb href="#control-panel">控制面板</Crumb>
        </CrumbWrap>
        <CrumbWrap>
          <Chevron />
          <Crumb href="#all-items">所有控制面板项</Crumb>
        </CrumbWrap>
      </Crumbs>
      <AddressButton aria-label="以前的位置">
        <svg width="12" height="16" viewBox="0 0 12 16">
          <path d="M2.500 6l4 4 4-4" fill="none" stroke="#707070" strokeWidth="1.900" />
        </svg>
      </AddressButton>
      <AddressButton $divided aria-label="刷新">
        <svg width="12" height="16" viewBox="0 0 12 16">
          <path d="M9.200 5.200A4.200 4.200 0 1 1 2.600 5.500L5.500 3.500" fill="none" stroke="#6a6a6a" strokeWidth="1.500" />
          <path d="M1.500 3h4.200v4.200" fill="none" stroke="#6a6a6a" strokeWidth="1.500" />
        </svg>
      </AddressButton>
    </AddressBar>
    <SearchBox type="search" aria-label="搜索控制面板" />
  </NavBar>
);

const BaiduMark = () => (
  <Watermark viewBox="0 -6 240 120" aria-hidden="true">
    <g fill="#fff" fillOpacity=".8" stroke="#dadada" strokeWidth="1.500">
      <ellipse cx="93" cy="26" rx="9" ry="12" />
      <ellipse cx="109" cy="10" rx="8" ry="12" />
      <ellipse cx="129" cy="10" rx="9" ry="12" />
      <ellipse cx="142" cy="31" rx="9" ry="11" />
      <path d="M117 27c8 0 11 5 17 12 8 8 12 12 11 19-2 11-13 13-24 10-12 3-27 1-30-10-2-8 3-12 9-19 6-7 9-12 17-12z" />
    </g>
    <g fill="#fff" stroke="#d8d8d8" strokeWidth="3" strokeLinejoin="round" paintOrder="stroke" fontFamily="Liberation Sans, sans-serif" fontWeight="700">
      <text x="6" y="69" fontSize="52">Bai</text>
      <text x="99" y="64" fontSize="32">du</text>
      <text x="153" y="65" fontSize="38" fontFamily="Noto Sans CJK SC, sans-serif">经验</text>
      <text x="7" y="98" fontSize="25" fontWeight="500" fontFamily="Noto Sans, sans-serif">jingyan.baidu.com</text>
    </g>
  </Watermark>
);

export default function App() {
  return (
    <Page>
      <GlobalStyle />
      <SharedDefs />
      <Navigation />
      <Heading>
        <Title>调整计算机的设置</Title>
        <ViewBy>
          <ViewLabel htmlFor="view-by">查看方式:</ViewLabel>
          <ViewSelect id="view-by" defaultValue="large">
            <option value="category">类别</option>
            <option value="large">大图标</option>
            <option value="small">小图标</option>
          </ViewSelect>
          <svg width="4" height="8" viewBox="0 0 4 8" aria-hidden="true">
            <path d="M0 2h8L4 6z" fill="#0066cc" />
          </svg>
        </ViewBy>
      </Heading>
      <Rule />
      <Grid>
        {entries.map((e) => (
          <Cell key={e.icon}>
            <Item href={`#${e.icon}`}>
              <ItemIcon viewBox="0 0 32 32" aria-hidden="true">
                {icons[e.icon]}
              </ItemIcon>
              <ItemLabel>{e.label}</ItemLabel>
            </Item>
            {e.marked && <Marker />}
          </Cell>
        ))}
      </Grid>
      <BaiduMark />
    </Page>
  );
}
